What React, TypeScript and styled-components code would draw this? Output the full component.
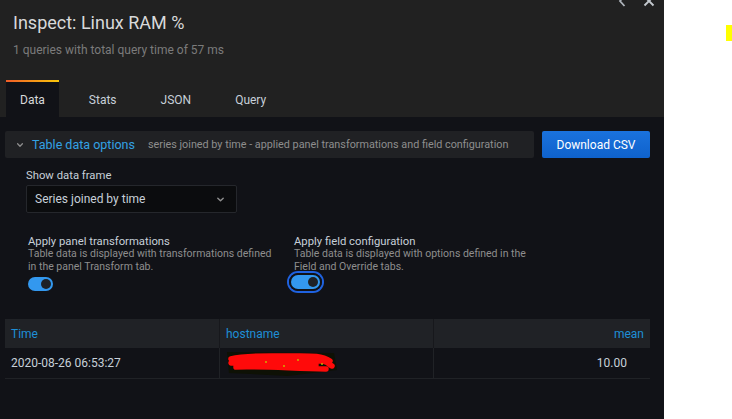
import React from 'react'
import styled, {createGlobalStyle} from 'styled-components';

const GlobalStyle = createGlobalStyle`
  html, body { margin: 0; padding: 0; background: #ffffff; }
  body { font-family: Roboto, "Liberation Sans", sans-serif; }
  * { box-sizing: border-box; }
`

type IToggle = {
    focused?: boolean;
}

type IColumn = {
    name: string;
    align?: 'left' | 'right';
}

const columns: IColumn[] = [
    {name: 'Time'},
    {name: 'hostname'},
    {name: 'mean', align: 'right'},
]

const tabs = ['Data', 'Stats', 'JSON', 'Query']

const Redacted = () => (
    <svg width="112" height="28" viewBox="0 0 112 28">
        <path d="M1 3 L108 4 L111 21 L62 27 L3 24 Z" fill="#0e1105"/>
        <path d="M5 10 C 20 6, 40 7, 62 7 S 95 6, 104 12 M5 14 C 30 11, 55 13, 80 12 S 100 14, 106 17 M10 18 C 30 17, 60 19, 100 20 M22 9 C 40 11, 70 10, 100 11 M30 16 C 50 15, 70 16, 90 16"
              stroke="#ff0a0a" strokeWidth="5.5" fill="none" strokeLinecap="round"/>
        <circle cx="40" cy="13" r="0.9" fill="#c8c000"/>
        <circle cx="72" cy="11" r="0.9" fill="#c8c000"/>
        <circle cx="96" cy="15" r="0.9" fill="#c8c000"/>
        <circle cx="58" cy="17" r="0.9" fill="#c8c000"/>
    </svg>
)

const Chevron = ({size = 8}: {size?: number}) => (
    <svg width={size} height={size} viewBox="0 0 10 10">
        <path d="M2 3.5 L5 6.5 L8 3.5" stroke="#8e8e8e" strokeWidth="1.6" fill="none" strokeLinecap="round" strokeLinejoin="round"/>
    </svg>
)

const Toggle = ({focused}: IToggle) => (
    <SwitchFrame focused={focused}>
        <SwitchTrack>
            <SwitchKnob/>
        </SwitchTrack>
    </SwitchFrame>
)

const App = () => {
  return (
    <>
      <GlobalStyle/>
      <Page>
        <Drawer>
            <Header>
                <TitleRow>
                    <div>
                        <Title>Inspect: Linux RAM %</Title>
                        <Subtitle>1 queries with total query time of 57 ms</Subtitle>
                    </div>
                    <HeaderIcons>
                        <svg width="9" height="12" viewBox="0 0 9 12">
                            <path d="M6.5 1 L2 6 L6.5 11" stroke="#aeb4bb" strokeWidth="1.8" fill="none"/>
                        </svg>
                        <svg width="12" height="12" viewBox="0 0 12 12">
                            <path d="M1.5 1.5 L10.5 10.5 M10.5 1.5 L1.5 10.5" stroke="#c3c8ce" strokeWidth="1.9"/>
                        </svg>
                    </HeaderIcons>
                </TitleRow>
                <TabBar>
                    {tabs.map((t, i) => <Tab key={t} active={i === 0}>{t}</Tab>)}
                </TabBar>
            </Header>
            <Body>
                <OptionsRow>
                    <OptionsBar>
                        <Chevron/>
                        <OptionsTitle>Table data options</OptionsTitle>
                        <OptionsDesc>series joined by time - applied panel transformations and field configuration</OptionsDesc>
                    </OptionsBar>
                    <PrimaryButton>Download CSV</PrimaryButton>
                </OptionsRow>
                <Options>
                    <Field>
                        <FieldLabel>Show data frame</FieldLabel>
                        <Select>
                            <span>Series joined by time</span>
                            <Chevron size={9}/>
                        </Select>
                    </Field>
                    <SwitchRow>
                        <SwitchField>
                            <FieldLabel>Apply panel transformations</FieldLabel>
                            <FieldDesc>Table data is displayed with transformations defined in the panel Transform tab.</FieldDesc>
                            <Toggle/>
                        </SwitchField>
                        <SwitchField>
                            <FieldLabel>Apply field configuration</FieldLabel>
                            <FieldDesc>Table data is displayed with options defined in the Field and Override tabs.</FieldDesc>
                            <Toggle focused/>
                        </SwitchField>
                    </SwitchRow>
                </Options>
                <Table>
                    <HeadRow>
                        {columns.map(c => <HeadCell key={c.name} align={c.align}>{c.name}</HeadCell>)}
                    </HeadRow>
                    <DataRow>
                        <Cell>2020-08-26 06:53:27</Cell>
                        <Cell><Redacted/></Cell>
                        <Cell align="right">10.00</Cell>
                    </DataRow>
                </Table>
            </Body>
        </Drawer>
        <Aside>
            <Marker/>
        </Aside>
      </Page>
    </>
  )
}

export default App

const Page = styled.div`
display: flex;
width: 732px;
height: 419px;
overflow: hidden;
`
const Drawer = styled.div`
width: 664px;
height: 419px;
display: flex;
flex-direction: column;
background: #111217;
`
const Header = styled.div`
background: #212121;
height: 117px;
display: flex;
flex-direction: column;
justify-content: space-between;
`
const TitleRow = styled.div`
display: flex;
justify-content: space-between;
padding: 12px 0 0 13px;
`
const Title = styled.div`
font-size: 18px;
color: #d8d9da;
line-height: 22px;
`
const Subtitle = styled.div`
margin-top: 8px;
font-size: 12px;
color: #7b7b7b;
line-height: 16px;
`
const HeaderIcons = styled.div`
display: flex;
gap: 16px;
align-items: flex-start;
margin-top: -17px;
margin-right: 9px;
`
const TabBar = styled.div`
display: flex;
gap: 16px;
padding-left: 6px;
`
const Tab = styled.div<{active?: boolean}>`
height: 37px;
padding: 0 14px;
display: flex;
align-items: center;
font-size: 12px;
color: ${p => p.active ? '#d8d9da' : '#c7d0d9'};
background: ${p => p.active ? '#111217' : 'transparent'};
border-top: 2px solid transparent;
border-image: ${p => p.active ? 'linear-gradient(90deg, #f05a28, #fbca0a) 1' : 'none'};
padding-top: 1px;
`
const Body = styled.div`
padding: 14px 14px 0 5px;
display: flex;
flex-direction: column;
`
const OptionsRow = styled.div`
display: flex;
gap: 8px;
`
const OptionsBar = styled.div`
flex: 1;
height: 27px;
background: #202124;
border-radius: 2px;
display: flex;
align-items: center;
padding-left: 11px;
`
const OptionsTitle = styled.span`
color: #33a2e5;
font-size: 12.5px;
margin-left: 8px;
`
const OptionsDesc = styled.span`
color: #8e8e8e;
font-size: 10.8px;
margin-left: 13px;
white-space: nowrap;
`
const PrimaryButton = styled.button`
width: 108px;
height: 27px;
border: none;
border-radius: 2px;
background: linear-gradient(180deg, #1a72dd, #0f62cc);
color: #ffffff;
font-family: inherit;
font-size: 12px;
padding: 0;
`
const Options = styled.div`
padding: 11px 0 0 21px;
display: flex;
flex-direction: column;
`
const Field = styled.div`
display: flex;
flex-direction: column;
`
const FieldLabel = styled.div`
font-size: 11.3px;
color: #c7d0d9;
line-height: 13px;
`
const FieldDesc = styled.div`
font-size: 10.5px;
color: #8e8e8e;
line-height: 12.5px;
max-width: 252px;
`
const Select = styled.div`
margin-top: 3px;
width: 211px;
height: 28px;
border: 1px solid #25272c;
border-radius: 2px;
background: #0b0c0e;
display: flex;
align-items: center;
justify-content: space-between;
padding: 0 11px 0 8px;
font-size: 12px;
color: #c7d0d9;
`
const SwitchRow = styled.div`
display: flex;
margin-top: 22px;
`
const SwitchField = styled.div`
width: 266px;
padding-left: 2px;
display: flex;
flex-direction: column;
`
const SwitchFrame = styled.div<{focused?: boolean}>`
width: ${p => p.focused ? '33px' : '29px'};
padding: 2px;
margin-left: ${p => p.focused ? '-5px' : '-2px'};
margin-top: ${p => p.focused ? '0px' : '2px'};
border-radius: 9px;
background: ${p => p.focused ? '#111217' : 'transparent'};
box-shadow: ${p => p.focused ? '0 0 0 2px #1f62e0, inset 0 0 0 1px #111217' : 'none'};
`
const SwitchTrack = styled.div`
width: 100%;
height: 14px;
border-radius: 7px;
background: #3398ef;
display: flex;
justify-content: flex-end;
align-items: center;
padding: 0 2px;
`
const SwitchKnob = styled.div`
width: 10px;
height: 10px;
border-radius: 50%;
background: #1e2126;
`
const Table = styled.div`
margin-top: 26px;
width: 645px;
display: flex;
flex-direction: column;
`
const HeadRow = styled.div`
display: grid;
grid-template-columns: 214px 214px 1fr;
height: 29px;
background: #202226;
`
const HeadCell = styled.div<{align?: 'left' | 'right'}>`
display: flex;
align-items: center;
justify-content: ${p => p.align === 'right' ? 'flex-end' : 'flex-start'};
padding: 0 6px;
font-size: 12px;
color: #1e8fd6;
& + & { border-left: 1px solid #17181c; }
`
const DataRow = styled.div`
display: grid;
grid-template-columns: 214px 214px 1fr;
height: 31px;
border-bottom: 1px solid #202226;
`
const Cell = styled.div<{align?: 'left' | 'right'}>`
display: flex;
align-items: center;
justify-content: ${p => p.align === 'right' ? 'flex-end' : 'flex-start'};
padding: ${p => p.align === 'right' ? '0 23px 0 6px' : '0 6px'};
font-size: 12px;
color: #c7d0d9;
& + & { border-left: 1px solid #202226; }
`
const Aside = styled.div`
flex: 1;
background: #ffffff;
display: flex;
justify-content: flex-end;
padding-top: 25px;
`
const Marker = styled.div`
width: 6px;
height: 16px;
background: #ffff00;
`
